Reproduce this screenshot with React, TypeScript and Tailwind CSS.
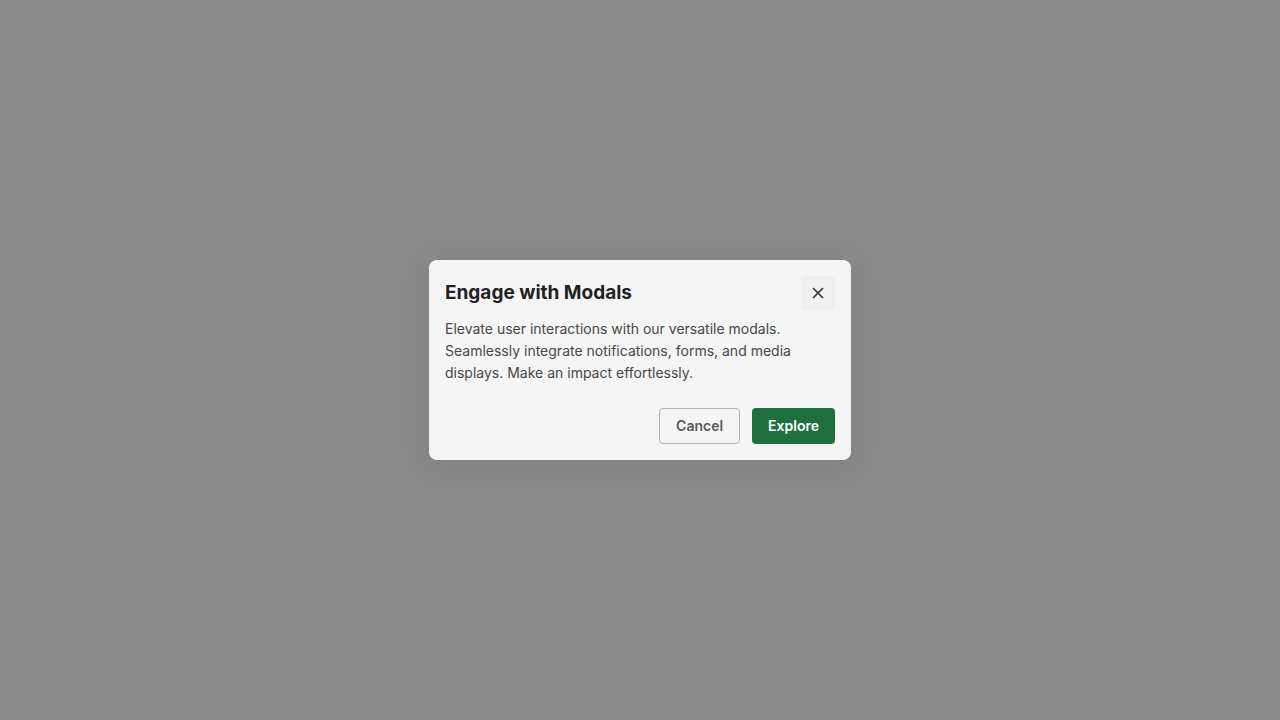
export default function App() {
  return (
    <div className="flex min-h-screen items-center justify-center bg-[#8a8a8a] font-['Inter',sans-serif]">
      <div
        role="dialog"
        aria-modal="true"
        aria-labelledby="modal-title"
        aria-describedby="modal-text"
        className="w-full max-w-[422px] rounded-lg bg-[#f5f5f5] p-4 shadow-[0_4px_32px_rgba(0,0,0,0.08)]"
      >
        <header className="flex items-center justify-between">
          <h2 id="modal-title" className="text-[19px] leading-7 font-bold text-[#222]">
            Engage with Modals
          </h2>
          <button
            type="button"
            aria-label="Close"
            className="flex size-[34px] items-center justify-center rounded bg-[#f0f0f0] text-[#333]"
          >
            <svg viewBox="0 0 12 12" className="size-3" fill="none" stroke="currentColor" strokeWidth="1.6">
              <path d="M1 1l10 10M11 1L1 11" />
            </svg>
          </button>
        </header>
        <p id="modal-text" className="mt-2 text-sm leading-[22px] text-[#484848]">
          Elevate user interactions with our versatile modals. Seamlessly integrate notifications, forms, and media
          displays. Make an impact effortlessly.
        </p>
        <footer className="mt-6 flex justify-end gap-3">
          <button
            type="button"
            className="h-9 rounded border border-[#b3b3b3] px-4 text-sm font-semibold text-[#5a5a5a]"
          >
            Cancel
          </button>
          <button type="button" className="h-9 rounded bg-[#20703f] px-4 text-sm font-semibold text-white">
            Explore
          </button>
        </footer>
      </div>
    </div>
  );
}
